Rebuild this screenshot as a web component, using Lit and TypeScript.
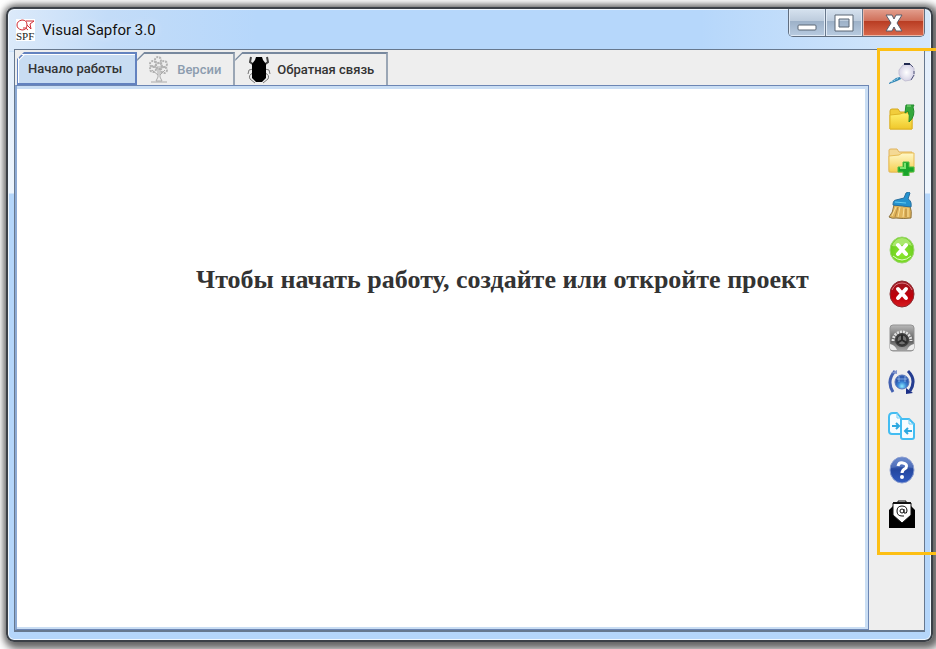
import { LitElement, html, css, svg } from "lit";
import { customElement, state } from "lit/decorators.js";
import { classMap } from "lit/directives/class-map.js";

const tools = [
  {
    name: "Поиск",
    art: svg`<path d="M1 23l7-5 4-1 1 2-4 2-8 3z" fill="#2f83b3"/><path d="M3 22l8-4" stroke="#a9e2f3" stroke-width="1" stroke-dasharray="2 1"/>
      <path d="M11 10l4-5 6-1 5 4v8l-3 4-6 1-4-3-2-4z" fill="url(#lens)" stroke="#c4c1d4"/><path d="M16 4h6" stroke="#20294f" stroke-width="2" fill="none"/><path d="M22 4l3 3M26 11v3M26 15l-3 5" stroke="#55597e" fill="none"/>
      <defs><radialGradient id="lens"><stop offset="0" stop-color="#fff"/><stop offset="1" stop-color="#d6d3e6"/></radialGradient></defs>`,
  },
  {
    name: "Открыть проект",
    art: svg`<defs><linearGradient id="fold" x2="0" y2="1"><stop offset="0" stop-color="#fff06a"/><stop offset="1" stop-color="#efc72b"/></linearGradient></defs>
      <path d="M2 25V7q0-2 2-2h6l2 3h12v17z" fill="#f1cd3c" stroke="#d6a91e"/><path d="M2 11l10-1 3-1h9v16H2z" fill="url(#fold)" stroke="#dfb525"/>
      <path d="M18 1h8l-1 2q3 9-4 15 1-7-1-11l-3 2z" fill="#34a83c" stroke="#208b2c"/><path d="M19 2h4" stroke="#8be07e"/>`,
  },
  {
    name: "Создать проект",
    art: svg`<defs><linearGradient id="pale" x2="0" y2="1"><stop offset="0" stop-color="#fff8c9"/><stop offset="1" stop-color="#f5cf50"/></linearGradient></defs>
      <path d="M1 24V2q0-1 2-1h6l2 3h13v20z" fill="#f4d995" stroke="#e0b45e"/><path d="M1 8l10-1 3-2h12v17q0 2-2 2H3q-2 0-2-2z" fill="url(#pale)" stroke="#e8bd55"/>
      <path d="M15 14h6v5h5v5h-5v4h-6v-4h-5v-5h5z" fill="#19a52b" stroke="#4fbd42"/><path d="M17 15v5h-5" stroke="#7be36f" stroke-width="2" fill="none"/>`,
  },
  {
    name: "Очистить",
    art: svg`<path d="M6 13q-1 8-5 12 3 2 7 1 7 1 15 0 1-7-1-12z" fill="#e0b45b" stroke="#8c723e"/><path d="M8 15l-4 9M12 15l-2 10M16 16l-1 9M20 16v9" stroke="#fae09a" stroke-width="1"/><path d="M10 15L7 25M18 17v8" stroke="#b48940"/>
      <path d="M5 13q0-5 3-5l8-2 2-5q3-2 4 0l-2 6q4 2 3 8-8-1-18-2z" fill="#2492cf" stroke="#286f9d"/><path d="M7 10l11 1" stroke="#66cdf2"/>`,
  },
  {
    name: "Закрыть проект",
    art: svg`<defs><radialGradient id="lime" cy=".65"><stop offset="0" stop-color="#8be72e"/><stop offset="1" stop-color="#6ed021"/></radialGradient></defs>
      <ellipse cx="14" cy="14" rx="12" ry="13" fill="url(#lime)" stroke="#9bd66d" stroke-width="1"/><path d="M4 10q3-8 10-8t10 8q-5-3-10-1t-10 1z" fill="#c1f18c" opacity=".7"/><path d="M5 20q9 8 18 0" stroke="#dcffc3" fill="none"/>
      <path d="M10 9l8 9M18 9l-8 9" stroke="#fff" stroke-width="4" stroke-linecap="round"/>`,
  },
  {
    name: "Удалить проект",
    art: svg`<defs><linearGradient id="ruby" x2="0" y2="1"><stop offset="0" stop-color="#9a1722"/><stop offset=".6" stop-color="#bf0009"/><stop offset="1" stop-color="#d61c22"/></linearGradient></defs>
      <ellipse cx="14" cy="14" rx="12" ry="13" fill="url(#ruby)" stroke="#8a2b31"/><path d="M4 10q3-7 10-7t10 7" stroke="#d77b81" fill="none"/>
      <path d="M10 9l8 9M18 9l-8 9" stroke="#fff" stroke-width="4" stroke-linecap="round"/>`,
  },
  {
    name: "Настройки",
    art: svg`<defs><linearGradient id="steel" x2="0" y2="1"><stop offset="0" stop-color="#b9b9b9"/><stop offset=".6" stop-color="#5c5c5c"/><stop offset="1" stop-color="#aaa"/></linearGradient></defs>
      <rect x="2" y="1" width="24" height="26" rx="3" fill="url(#steel)" stroke="#929292"/><path d="M5 17a9 9 0 0 1 18 0" stroke="#e2e2e2" stroke-width="3" stroke-dasharray="2 1" fill="none"/><circle cx="14" cy="16" r="7" fill="#3f3f3f"/>
      <circle cx="14" cy="16" r="5" fill="#707070" stroke="#2a2a2a"/><path d="M14 16v-5M14 16l5 3M14 16l-5 3" stroke="#2a2a2a" stroke-width="2"/><path d="M2 20q5 1 7 6H4q-2 0-2-2zM26 20q-5 1-7 6h5q2 0 2-2z" fill="#ececec"/>`,
  },
  {
    name: "Обновить",
    art: svg`<defs><radialGradient id="orb" cy=".8"><stop offset="0" stop-color="#8be9ff"/><stop offset=".6" stop-color="#3884d4"/><stop offset="1" stop-color="#2f5baf"/></radialGradient></defs>
      <circle cx="14" cy="14" r="7" fill="url(#orb)" stroke="#5777bd"/><path d="M9 11h10M11 8v6M17 8v6" stroke="#b9dcff" opacity=".6"/>
      <path d="M7 3Q-2 13 5 24" stroke="#4260b0" stroke-width="3" fill="none"/><path d="M20 3q9 9 2 20" stroke="#253d91" stroke-width="3" fill="none"/><path d="M18 20v6l7-1z" fill="#1b2f86"/><path d="M3 5l6-3v4z" fill="#8196cd"/>`,
  },
  {
    name: "Сравнить",
    art: svg`<g fill="#f6fcff" stroke="#43bdf2" stroke-width="2" stroke-linejoin="round"><path d="M1 5q0-4 4-4h4l4 5v16H4q-3 0-3-3z"/><path d="M13 7h8l5 5v13q0 2-2 2H15q-2 0-2-2z"/></g>
      <path d="M9 1v5h4M21 7v5h5" stroke="#75cdf3" fill="none"/><path d="M4 14h6M8 11l3 3-3 3M24 19h-6M20 16l-3 3 3 3" stroke="#2da9e1" stroke-width="2" fill="none"/>`,
  },
  {
    name: "Справка",
    art: svg`<defs><linearGradient id="navy" x2="0" y2="1"><stop offset="0" stop-color="#6384c9"/><stop offset=".5" stop-color="#24479f"/><stop offset="1" stop-color="#315bc1"/></linearGradient></defs>
      <ellipse cx="14" cy="14" rx="12" ry="13" fill="url(#navy)" stroke="#8b9ed0"/><path d="M3 12q2-10 11-10t11 10q-11-2-22 0z" fill="#839fda" opacity=".35"/>
      <path d="M10 10q1-4 5-3 5 1 3 5-4 2-4 5" stroke="#fff" stroke-width="3" fill="none"/><circle cx="14" cy="21" r="2" fill="#fff"/>`,
  },
  {
    name: "Написать письмо",
    art: svg`<path d="M1 10l4-4v7h18V6l4 4v18H1z" fill="#000"/><path d="M5 3h18v12l-9 8-9-8z" fill="#fff" stroke="#111"/><path d="M10 3V1h8v2" stroke="#111" stroke-width="1" fill="none"/><path d="M5 3h18" stroke="#111" stroke-width="2"/>
      <circle cx="14" cy="11" r="2" stroke="#111" fill="none"/><path d="M16 9v4q3 1 3-2 0-5-5-5t-5 5 5 5h2" stroke="#111" fill="none"/>`,
  },
];

@customElement("app-root")
export class AppRoot extends LitElement {
  @state() private tab = 0;

  static styles = css`
    :host {
      display: flex;
      box-sizing: border-box;
      min-height: 100vh;
      padding: 7px 3px 7px 6px;
      overflow: hidden;
      background: #fff;
      font-family: Roboto, "Liberation Sans", sans-serif;
    }
    * { box-sizing: border-box; }
    button { margin: 0; padding: 0; border: 0; background: none; font: inherit; }
    svg { display: block; fill: none; }
    .window {
      flex: 1;
      min-width: 0;
      display: flex;
      flex-direction: column;
      padding: 0 6px 8px;
      border: 2px solid #3b4047;
      border-radius: 8px;
      background:
        linear-gradient(90deg, #dceafa, #c3dcf8 100px, transparent 250px, transparent 75%, #d5e7fa) top / 100% 42px no-repeat,
        linear-gradient(#b6d7fb 42px, #e3eefb 43px, #edf5fd 184px, #b5d6fa 185px);
      box-shadow: inset 0 0 0 1px #eff7ff, 3px 3px 8px 4px #666, 0 0 6px 1px #888;
    }
    .titlebar { display: flex; height: 40px; flex: none; }
    .brand { display: flex; align-items: center; gap: 7px; flex: 1; height: 42px; padding-left: 2px; }
    .title { margin: 0; font: 400 15px/20px Roboto, sans-serif; color: #111; text-shadow: 0 0 8px #fff; }
    .controls { display: flex; height: 28px; border: 1px solid #606e80; border-top: 0; border-radius: 0 0 5px 5px; overflow: hidden; }
    .control {
      display: grid; place-items: center; width: 37px;
      background: linear-gradient(#d6e2ef, #bccbdc 45%, #9db1c8 46%, #b8cbe0);
      box-shadow: inset 0 0 0 1px #e0eaf5;
      border-right: 1px solid #68788c;
    }
    .close { width: 61px; border: 0; background: linear-gradient(#e3a08f, #cf6e58 45%, #b93d23 46%, #d9694c); box-shadow: inset 0 0 0 1px #eab5a6; }
    .client { flex: 1; display: flex; min-height: 0; position: relative; background: #eee; border: 1px solid #67788e; border-bottom-width: 2px; }
    .work { flex: 1; min-width: 0; display: flex; flex-direction: column; }
    .tabs { display: flex; height: 35px; padding: 2px 0 0 2px; align-items: stretch; }
    .tab {
      display: flex; align-items: center; gap: 6px; padding: 0 12px;
      border-top: 2px solid #77889e; border-right: 2px solid #9aa6b5;
      background: linear-gradient(135deg, #77889e 6px, #eee 7px) border-box;
      clip-path: polygon(7px 0, 100% 0, 100% 100%, 0 100%, 0 7px);
      color: #333; font-size: 13px; font-weight: 500; line-height: 16px; white-space: nowrap;
    }
    .tab.active {
      padding: 0 13px 0 10px;
      border: 2px solid #6382bf; border-left-width: 1px;
      background: linear-gradient(135deg, #6382bf 6px, #fff 7px, #c8dcf2 8px) border-box;
      box-shadow: inset 1px 1px #fff;
    }
    .tab:disabled { gap: 8px; color: #8c9cae; }
    .page { flex: 1; display: flex; justify-content: center; padding: 178px 0 0 120px; background: #fff; border: 1px solid #6c86b4; border-left: 2px solid #8ca9d3; box-shadow: inset 0 3px #cadef4, inset -3px -2px #cadef4; }
    .message { margin: 0; font: 700 26px/32px "Liberation Serif", serif; color: #333; text-align: center; }
    .toolbar { display: flex; flex-direction: column; align-items: center; gap: 16px; width: 55px; padding: 10px 0 0 11px; }
    .tool { width: 28px; height: 28px; flex: none; }
    .highlight { position: absolute; top: -2px; right: -20px; width: 67px; height: 507px; border: 3px solid #fdbf14; pointer-events: none; }
  `;

  private bug = svg`<svg width="24" height="28" viewBox="0 0 24 28"><g stroke="#777" stroke-width="1" fill="none"><path d="M6 13l-4 1-1 4M18 13l4 1 1 4M6 17q-5 2-3 6l5 4M18 17q5 2 3 6l-5 4"/></g><path d="M4 1L3 6l4 3M20 1l1 5-4 3" stroke="#444" stroke-width="2" fill="none"/><path d="M8 4l1-3h6l1 3 3 4v14l-4 4H9l-4-4V8z" fill="#000"/></svg>`;
  private tree = svg`<svg width="20" height="27" viewBox="0 0 20 27"><g fill="none" stroke="#b2b2b2" stroke-width="2" stroke-dasharray="2 1"><circle cx="9" cy="4" r="3"/><circle cx="4" cy="8" r="3"/><circle cx="15" cy="8" r="3"/><circle cx="4" cy="13" r="3"/><circle cx="15" cy="14" r="3"/><circle cx="10" cy="10" r="3"/></g><path d="M9 10v11l-2 4h6l-2-4V10M3 14l6 5M16 14l-5 5M2 26h16" stroke="#aaa"/></svg>`;

  render() {
    const tabs = [
      { label: "Начало работы", icon: null, off: false },
      { label: "Версии", icon: this.tree, off: true },
      { label: "Обратная связь", icon: this.bug, off: false },
    ];
    return html`
      <main class="window">
        <header class="titlebar">
          <div class="brand">
            <svg width="19" height="22" viewBox="0 0 19 22" role="img" aria-label="SPF">
              <rect width="19" height="22" fill="#fff"/>
              <path d="M6 11Q1 10 1 6t5-5q5 0 5 5t-5 5M7 9q3-1 5 2M10 2h8l-4 3 1 5-4-4" stroke="#d02b34"/>
              <text x="0" y="21" font-family="Liberation Serif, serif" font-size="11" fill="#222">SPF</text>
            </svg>
            <h1 class="title">Visual Sapfor 3.0</h1>
          </div>
          <div class="controls">
            <button class="control" aria-label="Свернуть"><svg width="20" height="20"><rect x="1" y="12" width="18" height="5" rx="1" fill="#fff" stroke="#5b6675"/></svg></button>
            <button class="control" aria-label="Развернуть"><svg width="20" height="18"><path fill-rule="evenodd" d="M1 1h18v16H1zM5 5v8h10V5z" fill="#fff" stroke="#5b6675"/></svg></button>
            <button class="control close" aria-label="Закрыть"><svg width="18" height="18"><path d="M1 1h6l2 4 2-4h6l-5 8 5 8h-6l-2-4-2 4H1l5-8z" fill="#fff" stroke="#5a5f6c"/></svg></button>
          </div>
        </header>
        <div class="client">
          <section class="work">
            <div class="tabs" role="tablist">
              ${tabs.map((t, i) => html`<button role="tab" class=${classMap({ tab: true, active: i === this.tab })} aria-selected=${i === this.tab} ?disabled=${t.off} @click=${() => (this.tab = i)}>${t.icon}${t.label}</button>`)}
            </div>
            <div class="page" role="tabpanel"><p class="message">Чтобы начать работу, создайте или откройте проект</p></div>
          </section>
          <nav class="toolbar" aria-label="Панель инструментов">
            ${tools.map((t) => html`<button class="tool" aria-label=${t.name}><svg width="28" height="28" viewBox="0 0 28 28">${t.art}</svg></button>`)}
          </nav>
          <div class="highlight"></div>
        </div>
      </main>`;
  }
}
